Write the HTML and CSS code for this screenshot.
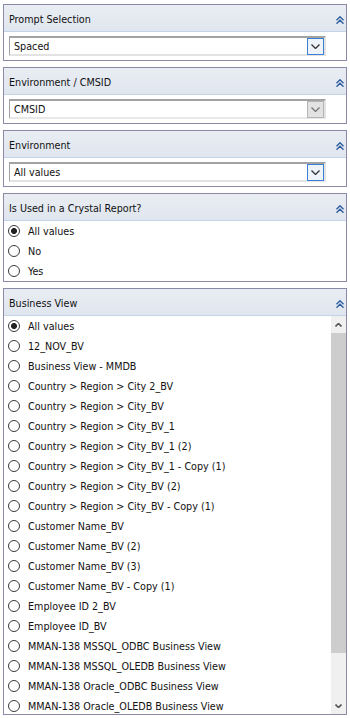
FILE: index.html
```html
<!DOCTYPE html>
<html lang="en">
<head>
  <meta charset="UTF-8">
  <title>Prompts</title>
  <link rel="stylesheet" href="styles.css">
</head>
<body>
  <div class="panels">

    <section class="panel">
      <div class="panel__head">
        <span>Prompt Selection</span>
        <svg class="collapse" width="8" height="8" viewBox="0 0 8 8"><path d="M0.5 4.2 L4 0.8 L7.5 4.2 M0.5 7.7 L4 4.3 L7.5 7.7"/></svg>
      </div>
      <div class="panel__body">
        <div class="combo">
          <span class="combo__value">Spaced</span>
          <span class="combo__btn"><svg width="9" height="5" viewBox="0 0 9 5"><path d="M0.5 0.5 L4.5 4.5 L8.5 0.5"/></svg></span>
        </div>
      </div>
    </section>

    <section class="panel">
      <div class="panel__head">
        <span>Environment / CMSID</span>
        <svg class="collapse" width="8" height="8" viewBox="0 0 8 8"><path d="M0.5 4.2 L4 0.8 L7.5 4.2 M0.5 7.7 L4 4.3 L7.5 7.7"/></svg>
      </div>
      <div class="panel__body">
        <div class="combo combo--disabled">
          <span class="combo__value">CMSID</span>
          <span class="combo__btn"><svg width="9" height="5" viewBox="0 0 9 5"><path d="M0.5 0.5 L4.5 4.5 L8.5 0.5"/></svg></span>
        </div>
      </div>
    </section>

    <section class="panel">
      <div class="panel__head">
        <span>Environment</span>
        <svg class="collapse" width="8" height="8" viewBox="0 0 8 8"><path d="M0.5 4.2 L4 0.8 L7.5 4.2 M0.5 7.7 L4 4.3 L7.5 7.7"/></svg>
      </div>
      <div class="panel__body">
        <div class="combo">
          <span class="combo__value">All values</span>
          <span class="combo__btn"><svg width="9" height="5" viewBox="0 0 9 5"><path d="M0.5 0.5 L4.5 4.5 L8.5 0.5"/></svg></span>
        </div>
      </div>
    </section>

    <section class="panel">
      <div class="panel__head">
        <span>Is Used in a Crystal Report?</span>
        <svg class="collapse" width="8" height="8" viewBox="0 0 8 8"><path d="M0.5 4.2 L4 0.8 L7.5 4.2 M0.5 7.7 L4 4.3 L7.5 7.7"/></svg>
      </div>
      <ul class="radios">
        <li class="radio radio--on">All values</li>
        <li class="radio">No</li>
        <li class="radio">Yes</li>
      </ul>
    </section>

    <section class="panel">
      <div class="panel__head">
        <span>Business View</span>
        <svg class="collapse" width="8" height="8" viewBox="0 0 8 8"><path d="M0.5 4.2 L4 0.8 L7.5 4.2 M0.5 7.7 L4 4.3 L7.5 7.7"/></svg>
      </div>
      <div class="listbox">
        <ul class="radios radios--scroll">
          <li class="radio radio--on">All values</li>
          <li class="radio">12_NOV_BV</li>
          <li class="radio">Business View - MMDB</li>
          <li class="radio">Country &gt; Region &gt; City 2_BV</li>
          <li class="radio">Country &gt; Region &gt; City_BV</li>
          <li class="radio">Country &gt; Region &gt; City_BV_1</li>
          <li class="radio">Country &gt; Region &gt; City_BV_1 (2)</li>
          <li class="radio">Country &gt; Region &gt; City_BV_1 - Copy (1)</li>
          <li class="radio">Country &gt; Region &gt; City_BV (2)</li>
          <li class="radio">Country &gt; Region &gt; City_BV - Copy (1)</li>
          <li class="radio">Customer Name_BV</li>
          <li class="radio">Customer Name_BV (2)</li>
          <li class="radio">Customer Name_BV (3)</li>
          <li class="radio">Customer Name_BV - Copy (1)</li>
          <li class="radio">Employee ID 2_BV</li>
          <li class="radio">Employee ID_BV</li>
          <li class="radio">MMAN-138 MSSQL_ODBC Business View</li>
          <li class="radio">MMAN-138 MSSQL_OLEDB Business View</li>
          <li class="radio">MMAN-138 Oracle_ODBC Business View</li>
          <li class="radio">MMAN-138 Oracle_OLEDB Business View</li>
        </ul>
        <div class="scrollbar">
          <span class="scrollbar__arrow"><svg width="7" height="4" viewBox="0 0 7 4"><path d="M0.5 3.5 L3.5 0.5 L6.5 3.5"/></svg></span>
          <span class="scrollbar__thumb"></span>
          <span class="scrollbar__track"></span>
          <span class="scrollbar__arrow"><svg width="7" height="4" viewBox="0 0 7 4"><path d="M0.5 0.5 L3.5 3.5 L6.5 0.5"/></svg></span>
        </div>
      </div>
    </section>

  </div>
</body>
</html>
```

FILE: styles.css
```css
body {
  margin: 0;
  background: #fff;
  font-family: "DejaVu Sans Condensed", "Liberation Sans", sans-serif;
  font-size: 10.7px;
  color: #111;
}
.panels {
  display: flex;
  flex-direction: column;
  gap: 6px;
  padding: 4px 3px 0 3px;
}
.panel {
  border: 1px solid #8b8aa6;
  background: #fff;
}
.panel__head {
  display: flex;
  align-items: center;
  justify-content: space-between;
  height: 26px;
  padding: 0 2px 0 5px;
  background: linear-gradient(#e9edf3, #e0e6ef);
  border-bottom: 1px solid #c3d4e9;
}
.panel__head span {
  padding-top: 3px;
}
.collapse {
  margin-top: 4px;
}
.collapse path {
  fill: none;
  stroke: #2d5c9e;
  stroke-width: 1.4;
}
.panel__body {
  padding: 4px 20px 4px 5px;
}

/* combo box */
.combo {
  display: flex;
  align-items: center;
  height: 20px;
  box-sizing: border-box;
  border-top: 2px solid #a2a2a2;
  border-left: 1px solid #a2a2a2;
  border-right: 2px solid #e3e3e3;
  border-bottom: 2px solid #e3e3e3;
  background: #fff;
}
.combo__value {
  flex: 1;
  padding-left: 4px;
}
.combo__btn {
  display: flex;
  align-items: center;
  justify-content: center;
  width: 15px;
  height: 15px;
  border: 1px solid #3b80d4;
  background: #eef3fa;
}
.combo__btn path {
  fill: none;
  stroke: #333;
  stroke-width: 1.3;
}
.combo--disabled {
  border-bottom-color: #e8e8e8;
}
.combo--disabled .combo__btn {
  border-color: #b5b5b5;
  background: #e2e2e2;
}
.combo--disabled .combo__btn path {
  stroke: #777;
}

/* radios */
.radios {
  list-style: none;
  margin: 0;
  padding: 0;
}
.radio {
  display: flex;
  align-items: center;
  height: 20px;
  padding-left: 4px;
  white-space: nowrap;
}
.radio::before {
  content: "";
  flex: none;
  width: 10px;
  height: 10px;
  margin-right: 8px;
  border: 1px solid #3a3a3a;
  border-radius: 50%;
  background: #fff;
}
.radio--on::before {
  background: radial-gradient(circle, #222 0, #222 2.6px, #fff 3.4px);
}

/* list with scrollbar */
.listbox {
  display: flex;
  height: 398px;
  overflow: hidden;
}
.radios--scroll {
  flex: 1;
  overflow: hidden;
}
.scrollbar {
  display: flex;
  flex-direction: column;
  width: 15px;
  background: #f0f0f0;
}
.scrollbar__arrow {
  display: flex;
  align-items: center;
  justify-content: center;
  height: 17px;
}
.scrollbar__arrow path {
  fill: none;
  stroke: #555;
  stroke-width: 1.6;
}
.scrollbar__thumb {
  height: 320px;
  background: #cdcdcd;
}
.scrollbar__track {
  flex: 1;
}
```
